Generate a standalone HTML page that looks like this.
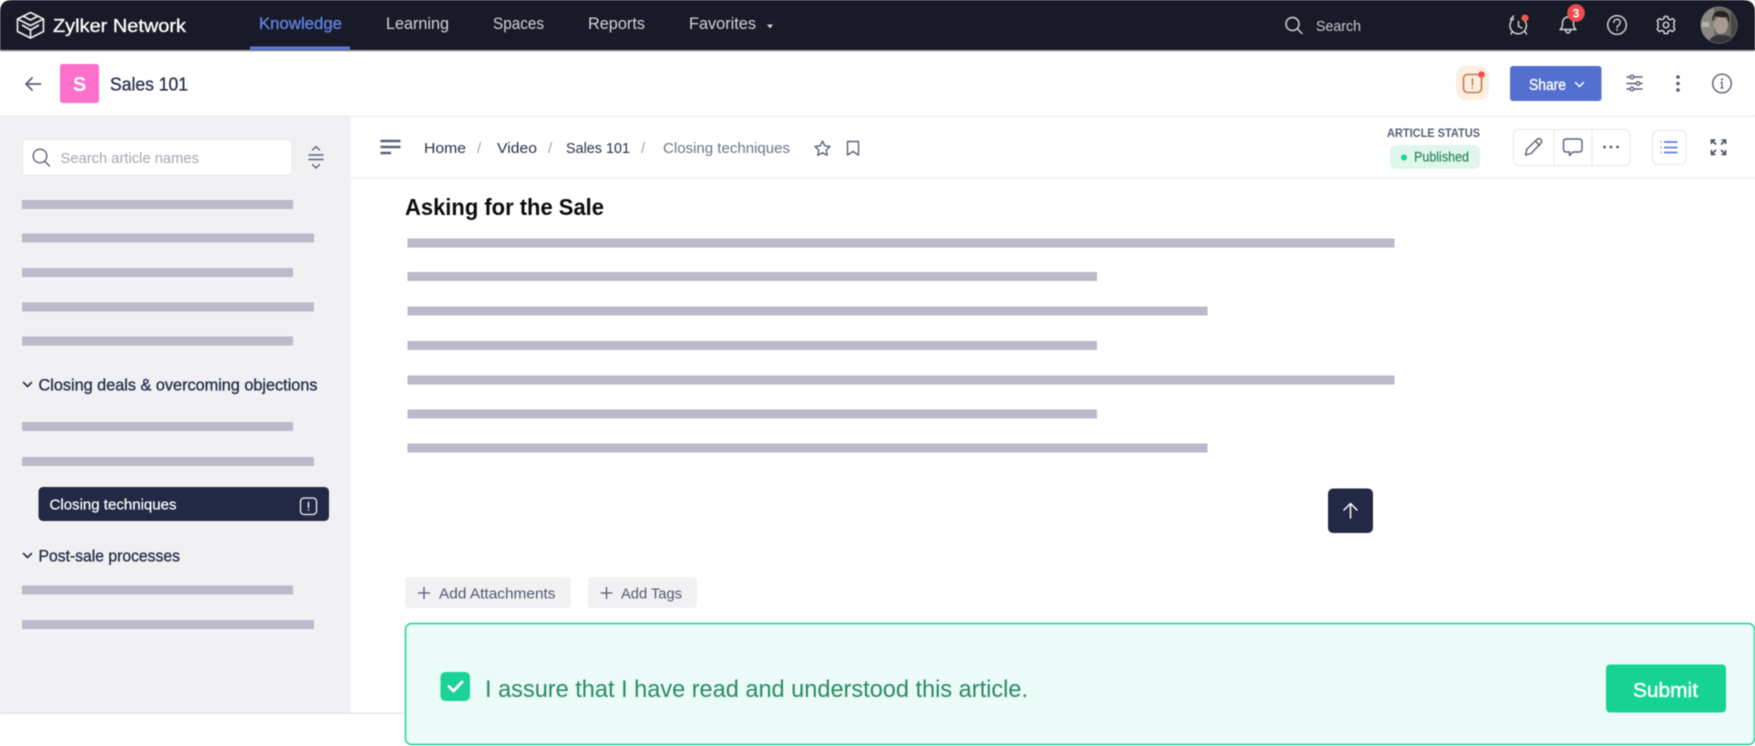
<!DOCTYPE html>
<html lang="en"><head><meta charset="utf-8"><title>Sales 101</title>
<style>
html,body{margin:0;padding:0;background:#fff;width:1755px;height:746px;overflow:hidden}
svg{display:block;filter:blur(.4px)}
text{font-family:"Liberation Sans",sans-serif}
.nv{font-size:16.5px;fill:#d2d3d6}
.bc{font-size:15px;fill:#2a2f4a}
.sl{font-size:15px;fill:#9a9caa}
.ic{fill:none;stroke:#5c6078;stroke-width:1.4;stroke-linecap:round;stroke-linejoin:round}
.tw{fill:none;stroke:#d8d9dc;stroke-width:1.4;stroke-linecap:round;stroke-linejoin:round}
.bar{fill:#bbb9ca}
</style></head><body>
<svg width="1755" height="746" viewBox="0 0 1755 746" xmlns="http://www.w3.org/2000/svg">
<defs><clipPath id="av"><circle cx="1719" cy="25" r="18"/></clipPath></defs>
<rect width="1755" height="746" fill="#fff"/>
<!-- top bar -->
<path d="M0 50V12Q0 0 12 0H1743Q1755 0 1755 12V50Z" fill="#181b27"/>
<rect y="50" width="1755" height="1.5" fill="#a9abb2"/>
<g fill="none" stroke="#f2f2f2" stroke-width="1.600" stroke-linejoin="round">
<path d="M30.500 12.500L43.500 19V31.500L30.500 38L17.500 31.500V19Z"/>
<path d="M17.500 19L30.500 25.500L43.500 19"/>
<path d="M23 16L30.500 20L38 16"/>
<path d="M22 25L30.500 30L39 25"/>
<path d="M30.500 30V38"/>
</g>
<text x="53" y="32" font-size="18" fill="#fff" stroke="#fff" stroke-width=".3" textLength="133" lengthAdjust="spacingAndGlyphs">Zylker Network</text>
<text x="259" y="29" class="nv" style="fill:#6285ea" stroke="#6285ea" stroke-width=".25" textLength="83" lengthAdjust="spacingAndGlyphs">Knowledge</text>
<rect x="250" y="46.500" width="100" height="3" fill="#5b7de0"/>
<text x="386" y="29" class="nv" textLength="63" lengthAdjust="spacingAndGlyphs">Learning</text>
<text x="493" y="29" class="nv" textLength="51" lengthAdjust="spacingAndGlyphs">Spaces</text>
<text x="588" y="29" class="nv" textLength="57" lengthAdjust="spacingAndGlyphs">Reports</text>
<text x="689" y="29" class="nv" textLength="67" lengthAdjust="spacingAndGlyphs">Favorites</text>
<path d="M767 24.500H773L770 28.500Z" fill="#d2d3d6"/>
<circle cx="1292.500" cy="24" r="6.500" class="tw"/><path d="M1297.500 29L1302 33.500" class="tw"/>
<text x="1316" y="31" font-size="15" fill="#c8c9cc" textLength="45" lengthAdjust="spacingAndGlyphs">Search</text>
<!-- alarm -->
<g class="tw"><path d="M1522 18.300A8.200 8.200 0 1 1 1513.500 18.800"/><path d="M1518.500 21.500V26.500L1522 28"/><path d="M1510.500 19.500L1513.500 16"/><path d="M1512.500 31.500L1511 34M1525 31.500L1526.500 34"/></g>
<circle cx="1525" cy="18" r="3.500" fill="#ee5a4b"/>
<!-- bell -->
<g class="tw"><path d="M1560 29.500Q1562.500 28 1562.500 24V23A5.500 6 0 0 1 1573.500 23V24Q1573.500 28 1576 29.500Z"/><path d="M1565.500 30.500Q1568 35.500 1570.500 30.500"/></g>
<circle cx="1576" cy="13" r="8.800" fill="#ee4b50"/>
<text x="1576" y="17.500" font-size="12" font-weight="700" fill="#fff" text-anchor="middle">3</text>
<!-- help -->
<circle cx="1617" cy="25" r="9.300" class="tw"/>
<path d="M1613.800 22.500A3.200 3.200 0 1 1 1618.500 25.300Q1617 26.200 1617 27.500" class="tw"/><circle cx="1617" cy="30" r=".9" fill="#d8d9dc"/>
<!-- gear -->
<g class="tw"><circle cx="1666" cy="25" r="2.800"/>
<path d="M1664.300 16.500H1667.700L1668.300 18.900L1670.400 19.800L1672.500 18.500L1674.900 20.900L1673.600 23L1674.300 25L1673.600 27.100L1674.900 29.200L1672.500 31.600L1670.400 30.300L1668.300 31.200L1667.700 33.500H1664.300L1663.700 31.200L1661.600 30.300L1659.500 31.600L1657.100 29.200L1658.400 27.100L1657.700 25L1658.400 23L1657.100 20.900L1659.500 18.500L1661.600 19.800L1663.700 18.900Z"/></g>
<!-- avatar -->
<circle cx="1719" cy="25" r="18.500" fill="#8c8a88"/>
<g clip-path="url(#av)">
<rect x="1700" y="6" width="38" height="38" fill="#6a6866"/>
<rect x="1700" y="6" width="14" height="38" fill="#8a8884"/>
<rect x="1702" y="22" width="7" height="5" fill="#b5b3ae"/>
<ellipse cx="1721" cy="25" rx="7" ry="9" fill="#a89a90"/>
<path d="M1712 22Q1712 10 1722 11Q1731 12 1729 23L1727 17Q1720 18 1715 16Z" fill="#26241f"/>
<path d="M1708 44Q1710 35 1721 35Q1733 35 1735 44Z" fill="#33333a"/>
<rect x="1731" y="8" width="8" height="30" fill="#4a4846"/>
</g>
<!-- sub header -->
<path d="M40.500 84H26M32 78L26 84L32 90" fill="none" stroke="#5c6078" stroke-width="1.800" stroke-linecap="round" stroke-linejoin="round"/>
<rect x="60" y="64" width="39" height="39" rx="2.500" fill="#fc6fcb"/>
<text x="79.500" y="91" font-size="20" font-weight="700" fill="#fff" text-anchor="middle">S</text>
<text x="110" y="90.500" font-size="18.500" fill="#2a2f4a" stroke="#2a2f4a" stroke-width=".3" textLength="78" lengthAdjust="spacingAndGlyphs">Sales 101</text>
<rect x="1456" y="66" width="33" height="34" rx="10" fill="#fdeee2"/>
<rect x="1463.500" y="74.500" width="18" height="18" rx="4" fill="none" stroke="#c47c4e" stroke-width="1.600"/>
<path d="M1472.500 79V85" stroke="#c47c4e" stroke-width="1.600" stroke-linecap="round"/><circle cx="1472.500" cy="88" r=".9" fill="#c47c4e"/>
<circle cx="1481.500" cy="74.500" r="3.300" fill="#ee5050"/>
<rect x="1510" y="66" width="91.500" height="35" rx="3" fill="#5470cf"/>
<text x="1529" y="90" font-size="15.500" fill="#fff" textLength="37" lengthAdjust="spacingAndGlyphs" stroke="#fff" stroke-width=".35">Share</text>
<path d="M1575.500 82.500L1579.500 86.500L1583.500 82.500" fill="none" stroke="#fff" stroke-width="1.500" stroke-linecap="round" stroke-linejoin="round"/>
<g class="ic"><path d="M1627 77H1642M1627 83.500H1642M1627 89H1642"/><circle cx="1632" cy="77" r="1.800" fill="#fff"/><circle cx="1638" cy="83.500" r="1.800" fill="#fff"/><circle cx="1632" cy="89" r="1.800" fill="#fff"/></g>
<circle cx="1678" cy="77" r="1.800" fill="#54586e"/><circle cx="1678" cy="83.500" r="1.800" fill="#54586e"/><circle cx="1678" cy="90" r="1.800" fill="#54586e"/>
<circle cx="1722" cy="83.500" r="9.300" class="ic"/><circle cx="1722" cy="79.500" r="1.100" fill="#5c6078"/><path d="M1720.500 82.500H1722V88M1720.500 88H1723.500" fill="none" stroke="#5c6078" stroke-width="1.300"/>
<rect y="115.500" width="1755" height="1.500" fill="#ededf0"/>
<!-- sidebar -->
<rect y="117" width="351" height="596" fill="#f1f1f4"/>
<rect y="712.500" width="405" height="1.500" fill="#e5e5e8"/>
<rect x="22.500" y="139.500" width="269.500" height="36" rx="4" fill="#fff" stroke="#e7e7eb"/>
<circle cx="40" cy="156" r="6.800" class="ic"/><path d="M45 161.500L49.500 166" class="ic"/>
<text x="60.500" y="163" font-size="15" class="sl" textLength="138.500" lengthAdjust="spacingAndGlyphs" style="fill:#a4a6b2">Search article names</text>
<g class="ic"><path d="M312.500 150L316 146.500L319.500 150M312.500 164.500L316 168L319.500 164.500"/><path d="M309 155H323M309 159.500H323"/></g>
<rect x="22" y="200" width="271" height="9" class="bar"/>
<rect x="22" y="233.500" width="292" height="9" class="bar"/>
<rect x="22" y="268" width="271" height="9" class="bar"/>
<rect x="22" y="302.500" width="292" height="9" class="bar"/>
<rect x="22" y="336.500" width="271" height="9" class="bar"/>
<path d="M23.500 382.500L27.500 386.500L31.500 382.500" fill="none" stroke="#2a2f4a" stroke-width="1.600" stroke-linecap="round" stroke-linejoin="round"/>
<text x="38.500" y="390.500" font-size="16.500" fill="#2a2f4a" stroke="#2a2f4a" stroke-width=".35" textLength="279" lengthAdjust="spacingAndGlyphs">Closing deals &amp; overcoming objections</text>
<rect x="22" y="422" width="271" height="9" class="bar"/>
<rect x="22" y="457" width="292" height="9" class="bar"/>
<rect x="38.500" y="487" width="290.500" height="34" rx="4.500" fill="#232944"/>
<text x="49.500" y="509.500" font-size="15" fill="#fff" stroke="#fff" stroke-width=".2" textLength="127" lengthAdjust="spacingAndGlyphs">Closing techniques</text>
<rect x="300.500" y="498" width="16" height="16.500" rx="3.500" fill="none" stroke="#f0f0f4" stroke-width="1.300"/>
<path d="M308.500 502.500V507.500" stroke="#f0f0f4" stroke-width="1.400" stroke-linecap="round"/><circle cx="308.500" cy="510" r=".8" fill="#f0f0f4"/>
<path d="M23.500 553.500L27.500 557.500L31.500 553.500" fill="none" stroke="#2a2f4a" stroke-width="1.600" stroke-linecap="round" stroke-linejoin="round"/>
<text x="38.500" y="561.500" font-size="16.500" fill="#2a2f4a" stroke="#2a2f4a" stroke-width=".35" textLength="141.500" lengthAdjust="spacingAndGlyphs">Post-sale processes</text>
<rect x="22" y="585.500" width="271" height="9" class="bar"/>
<rect x="22" y="620" width="292" height="9" class="bar"/>
<!-- breadcrumb -->
<path d="M380.500 141H400.500M380.500 147H400.500M380.500 153H391" fill="none" stroke="#5c6078" stroke-width="2.400"/>
<text x="424" y="153" class="bc" textLength="42" lengthAdjust="spacingAndGlyphs">Home</text>
<text x="477" y="153" class="bc" style="fill:#a0a2ae">/</text>
<text x="497" y="153" class="bc" textLength="40" lengthAdjust="spacingAndGlyphs">Video</text>
<text x="548" y="153" class="bc" style="fill:#a0a2ae">/</text>
<text x="566" y="153" class="bc" textLength="64" lengthAdjust="spacingAndGlyphs">Sales 101</text>
<text x="641" y="153" class="bc" style="fill:#a0a2ae">/</text>
<text x="663" y="153" class="bc" style="fill:#6e7287" textLength="127" lengthAdjust="spacingAndGlyphs">Closing techniques</text>
<path d="M822.500 141L824.800 145.800L830 146.500L826.200 150.100L827.200 155.300L822.500 152.700L817.800 155.300L818.800 150.100L815 146.500L820.200 145.800Z" class="ic" stroke-width="1.200"/>
<path d="M847.500 141.500H858.500V155L853 151.500L847.500 155Z" class="ic" stroke-width="1.200"/>
<text x="1387" y="137" font-size="12" font-weight="700" fill="#5b5f76" textLength="93" lengthAdjust="spacingAndGlyphs">ARTICLE STATUS</text>
<rect x="1390" y="145" width="90" height="24" rx="6" fill="#e0f6ec"/>
<circle cx="1404" cy="157.500" r="3" fill="#1ed396"/>
<text x="1414" y="161.500" font-size="14" fill="#2a8660" stroke="#2a8660" stroke-width=".2" textLength="55" lengthAdjust="spacingAndGlyphs">Published</text>
<rect x="1513.500" y="129.500" width="116.500" height="36" rx="5" fill="#fff" stroke="#e8e8ec"/>
<path d="M1554 130V165M1592 130V165" stroke="#e8e8ec"/>
<path d="M1525.500 155L1527 149L1537.500 139Q1539.500 138 1541 139.500Q1542.500 141.500 1541 143L1531 153.500ZM1535.500 141L1539.500 145.500" class="ic" stroke-width="1.200"/>
<path d="M1566.500 139H1579Q1582 139 1582 142V149Q1582 152 1579 152H1573L1569.500 155.500V152H1566.500Q1563.500 152 1563.500 149V142Q1563.500 139 1566.500 139Z" class="ic" stroke-width="1.200"/>
<circle cx="1604.500" cy="147" r="1.400" fill="#54586e"/><circle cx="1611" cy="147" r="1.400" fill="#54586e"/><circle cx="1617.500" cy="147" r="1.400" fill="#54586e"/>
<rect x="1652.500" y="130.500" width="33.500" height="34" rx="5" fill="#fff" stroke="#e8e8ec"/>
<path d="M1664 142H1677.500M1664 147.500H1677.500M1664 152.500H1677.500M1660.500 142H1661.500M1660.500 147.500H1661.500M1660.500 152.500H1661.500" stroke="#5f7fe0" stroke-width="1.800" fill="none"/>
<g fill="none" stroke="#4a4e66" stroke-width="1.600"><path d="M1711.500 144V140H1715.500M1711.500 140L1716 144.500M1725.500 144V140H1721.500M1725.500 140L1721 144.500M1711.500 150V154.500H1715.500M1711.500 154.500L1716 150M1725.500 150V154.500H1721.500M1725.500 154.500L1721 150"/></g>
<rect x="351" y="177.500" width="1404" height="1.500" fill="#f0f0f3"/>
<!-- article -->
<text x="405" y="215" font-size="23" font-weight="700" fill="#0c0c10" textLength="199" lengthAdjust="spacingAndGlyphs">Asking for the Sale</text>
<rect x="407.500" y="238.500" width="987" height="9" class="bar"/>
<rect x="407.500" y="272" width="689.500" height="9" class="bar"/>
<rect x="407.500" y="306.500" width="800" height="9" class="bar"/>
<rect x="407.500" y="341" width="689.500" height="9" class="bar"/>
<rect x="407.500" y="375.500" width="987" height="9" class="bar"/>
<rect x="407.500" y="409.500" width="689.500" height="9" class="bar"/>
<rect x="407.500" y="443.500" width="800" height="9" class="bar"/>
<rect x="1328" y="488.500" width="45" height="44.500" rx="5" fill="#232944"/>
<path d="M1350.500 518V504M1344 510L1350.500 503.500L1357 510" fill="none" stroke="#fff" stroke-width="1.500" stroke-linecap="round" stroke-linejoin="round"/>
<rect x="405" y="577" width="166" height="31" rx="4" fill="#f1f1f4"/>
<path d="M424 587V599M418 593H430" stroke="#54586e" stroke-width="1.300"/>
<text x="439" y="598.500" font-size="15" fill="#54586e" textLength="116.500" lengthAdjust="spacingAndGlyphs">Add Attachments</text>
<rect x="588" y="577" width="109" height="31" rx="4" fill="#f1f1f4"/>
<path d="M606.500 587V599M600.500 593H612.500" stroke="#54586e" stroke-width="1.300"/>
<text x="621" y="598.500" font-size="15" fill="#54586e" textLength="61" lengthAdjust="spacingAndGlyphs">Add Tags</text>
<rect x="405.500" y="623.500" width="1349" height="121" rx="6" fill="#ebfbf7" stroke="#1dd39a" stroke-width="1.500"/>
<rect x="440.500" y="672" width="29.500" height="29" rx="5" fill="#1bd396"/>
<path d="M449 686.500L453.500 691L462 682" fill="none" stroke="#fff" stroke-width="2.800" stroke-linecap="round" stroke-linejoin="round"/>
<text x="485" y="697" font-size="24" fill="#2a8a63" textLength="543" lengthAdjust="spacingAndGlyphs">I assure that I have read and understood this article.</text>
<rect x="1606" y="664.500" width="120" height="48" rx="4" fill="#16d394"/>
<text x="1633" y="697" font-size="20" fill="#fff" stroke="#fff" stroke-width=".4" textLength="65" lengthAdjust="spacingAndGlyphs">Submit</text>
</svg>
</body></html>
